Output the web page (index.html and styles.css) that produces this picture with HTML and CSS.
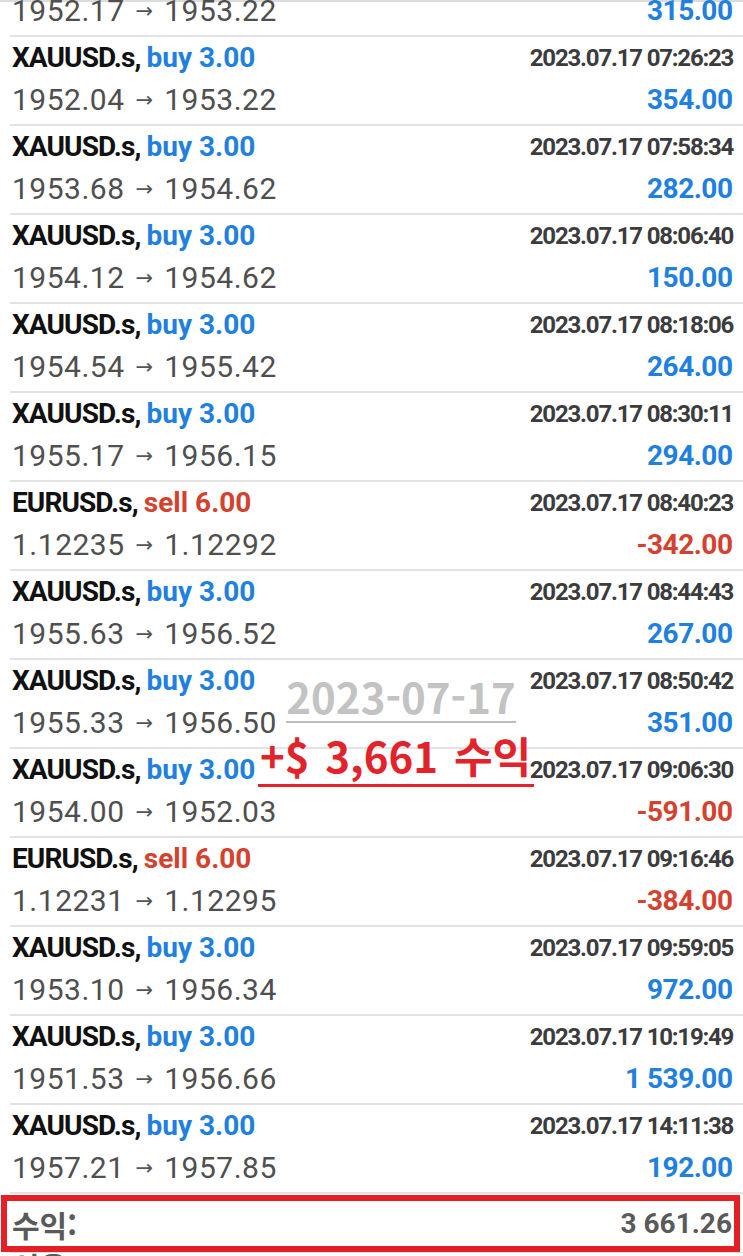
FILE: index.html
```html
<!DOCTYPE html>
<html lang="ko">
<head>
<meta charset="utf-8">
<title>History</title>
<link rel="stylesheet" href="styles.css">
</head>
<body>
<div class="page">
  <div class="list">
    <div class="row">
      <div class="sym">XAUUSD.s, <span class="buy">buy 3.00</span></div>
      <div class="time">2023.07.17 07:14:02</div>
      <div class="price">1952.17<span class="arr">→</span>1953.22</div>
      <div class="profit">315.00</div>
    </div>
    <div class="row">
      <div class="sym">XAUUSD.s, <span class="buy">buy 3.00</span></div>
      <div class="time">2023.07.17 07:26:23</div>
      <div class="price">1952.04<span class="arr">→</span>1953.22</div>
      <div class="profit">354.00</div>
    </div>
    <div class="row">
      <div class="sym">XAUUSD.s, <span class="buy">buy 3.00</span></div>
      <div class="time">2023.07.17 07:58:34</div>
      <div class="price">1953.68<span class="arr">→</span>1954.62</div>
      <div class="profit">282.00</div>
    </div>
    <div class="row">
      <div class="sym">XAUUSD.s, <span class="buy">buy 3.00</span></div>
      <div class="time">2023.07.17 08:06:40</div>
      <div class="price">1954.12<span class="arr">→</span>1954.62</div>
      <div class="profit">150.00</div>
    </div>
    <div class="row">
      <div class="sym">XAUUSD.s, <span class="buy">buy 3.00</span></div>
      <div class="time">2023.07.17 08:18:06</div>
      <div class="price">1954.54<span class="arr">→</span>1955.42</div>
      <div class="profit">264.00</div>
    </div>
    <div class="row">
      <div class="sym">XAUUSD.s, <span class="buy">buy 3.00</span></div>
      <div class="time">2023.07.17 08:30:11</div>
      <div class="price">1955.17<span class="arr">→</span>1956.15</div>
      <div class="profit">294.00</div>
    </div>
    <div class="row">
      <div class="sym">EURUSD.s, <span class="sell">sell 6.00</span></div>
      <div class="time">2023.07.17 08:40:23</div>
      <div class="price">1.12235<span class="arr">→</span>1.12292</div>
      <div class="profit loss">-342.00</div>
    </div>
    <div class="row">
      <div class="sym">XAUUSD.s, <span class="buy">buy 3.00</span></div>
      <div class="time">2023.07.17 08:44:43</div>
      <div class="price">1955.63<span class="arr">→</span>1956.52</div>
      <div class="profit">267.00</div>
    </div>
    <div class="row">
      <div class="sym">XAUUSD.s, <span class="buy">buy 3.00</span></div>
      <div class="time">2023.07.17 08:50:42</div>
      <div class="price">1955.33<span class="arr">→</span>1956.50</div>
      <div class="profit">351.00</div>
    </div>
    <div class="row">
      <div class="sym">XAUUSD.s, <span class="buy">buy 3.00</span></div>
      <div class="time">2023.07.17 09:06:30</div>
      <div class="price">1954.00<span class="arr">→</span>1952.03</div>
      <div class="profit loss">-591.00</div>
    </div>
    <div class="row">
      <div class="sym">EURUSD.s, <span class="sell">sell 6.00</span></div>
      <div class="time">2023.07.17 09:16:46</div>
      <div class="price">1.12231<span class="arr">→</span>1.12295</div>
      <div class="profit loss">-384.00</div>
    </div>
    <div class="row">
      <div class="sym">XAUUSD.s, <span class="buy">buy 3.00</span></div>
      <div class="time">2023.07.17 09:59:05</div>
      <div class="price">1953.10<span class="arr">→</span>1956.34</div>
      <div class="profit">972.00</div>
    </div>
    <div class="row">
      <div class="sym">XAUUSD.s, <span class="buy">buy 3.00</span></div>
      <div class="time">2023.07.17 10:19:49</div>
      <div class="price">1951.53<span class="arr">→</span>1956.66</div>
      <div class="profit">1 539.00</div>
    </div>
    <div class="row">
      <div class="sym">XAUUSD.s, <span class="buy">buy 3.00</span></div>
      <div class="time">2023.07.17 14:11:38</div>
      <div class="price">1957.21<span class="arr">→</span>1957.85</div>
      <div class="profit">192.00</div>
    </div>
  </div>
  <div class="summary">
    <span class="sum-label">수익:</span>
    <span class="sum-value">3 661.26</span>
  </div>
  <div class="summary-next">
    <span class="sum-label">신용:</span>
  </div>

  <div class="stamp-date">2023-07-17</div>
  <div class="stamp-gain">+$ 3,661 수익</div>
</div>
</body>
</html>
```

FILE: styles.css
```css
html, body {
  margin: 0;
  padding: 0;
  background: #ffffff;
}

body {
  font-family: Roboto, "Noto Sans CJK KR", sans-serif;
}

.page {
  position: relative;
  width: 743px;
  border-top: 2px solid #dcdcdc;
}

.list {
  margin-top: -54px;
}

.row {
  margin-left: 10px;
  padding: 0 11px 3px 2px;
  display: grid;
  grid-template-columns: 1fr auto;
  grid-template-rows: 42px 42px;
  border-bottom: 2px solid #e3e3e3;
}

.sym {
  font-weight: 700;
  font-size: 28px;
  line-height: 42px;
  letter-spacing: -0.9px;
  color: #111111;
  white-space: nowrap;
}

.buy,
.sell {
  letter-spacing: 0;
}

.buy {
  color: #1f80df;
}

.sell {
  color: #d4412f;
}

.time {
  font-weight: 700;
  font-size: 24px;
  line-height: 42px;
  letter-spacing: -1.2px;
  margin-right: -1.2px;
  color: #3c3c3e;
  text-align: right;
  white-space: nowrap;
}

.price {
  font-size: 30px;
  line-height: 42px;
  letter-spacing: 0.5px;
  color: #4f4f4f;
  white-space: nowrap;
}

.arr {
  font-family: "DejaVu Sans", sans-serif;
  font-size: 21px;
  letter-spacing: 0;
  margin: 0 11px 0 11px;
  position: relative;
  top: -3px;
  color: #555555;
}

.profit {
  font-weight: 700;
  font-size: 28px;
  line-height: 42px;
  letter-spacing: -0.5px;
  margin-right: -0.5px;
  color: #1f80df;
  text-align: right;
  white-space: nowrap;
}

.profit.loss {
  color: #d4412f;
}

.summary {
  margin: 1px 3px 0 1px;
  height: 45px;
  border: 6px solid #e41f26;
  padding: 0 2px 0 5px;
  display: flex;
  justify-content: space-between;
  align-items: center;
}

.sum-label {
  font-family: "Noto Sans CJK KR", sans-serif;
  font-weight: 700;
  font-size: 30px;
  line-height: 30px;
  color: #5a5a5a;
}

.sum-value {
  font-weight: 700;
  font-size: 28px;
  color: #5a5a5a;
}

.summary-next {
  margin-left: 10px;
  padding-left: 2px;
  border-top: 1px solid #dddddd;
  line-height: 26px;
  height: 40px;
}

.summary-next .sum-label {
  line-height: 26px;
}

.stamp-date {
  position: absolute;
  left: 286px;
  top: 672px;
  width: 230px;
  padding-bottom: 3px;
  border-bottom: 2px solid #bdbdbd;
  font-family: "Noto Sans CJK KR", sans-serif;
  font-weight: 700;
  font-size: 42px;
  line-height: 44px;
  color: #c3c3c3;
  text-align: center;
  white-space: nowrap;
}

.stamp-gain {
  position: absolute;
  left: 258px;
  top: 730px;
  width: 274px;
  padding: 0 0 6px 2px;
  border-bottom: 3px solid #e3232c;
  font-family: "Noto Sans CJK KR", sans-serif;
  font-weight: 700;
  font-size: 42px;
  line-height: 46px;
  word-spacing: 4px;
  color: #e3232c;
  white-space: nowrap;
}
```
